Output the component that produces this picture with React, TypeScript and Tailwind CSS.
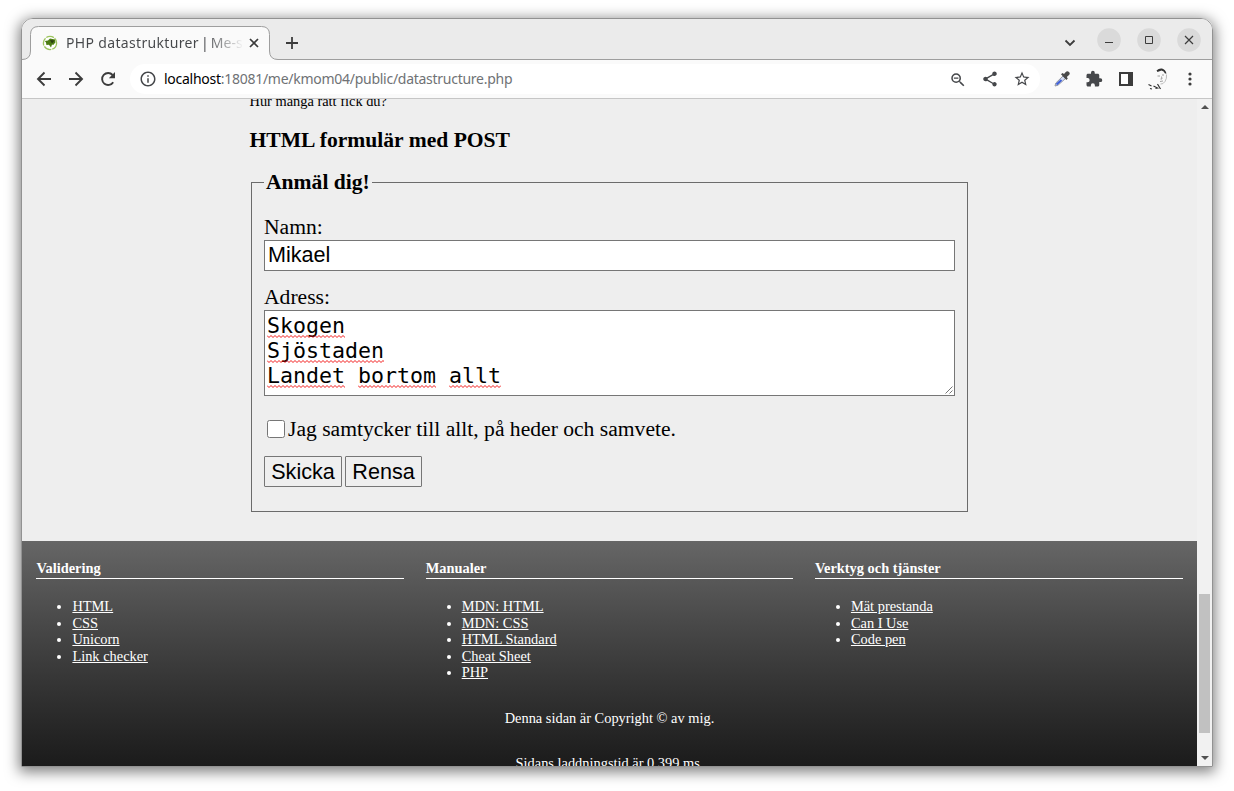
import React from "react";

const columns = [
  { title: "Validering", links: ["HTML", "CSS", "Unicorn", "Link checker"] },
  { title: "Manualer", links: ["MDN: HTML", "MDN: CSS", "HTML Standard", "Cheat Sheet", "PHP"] },
  { title: "Verktyg och tjänster", links: ["Mät prestanda", "Can I Use", "Code pen"] },
];

function Favicon() {
  return (
    <svg width="16" height="16" viewBox="0 0 16 16" className="shrink-0">
      <circle cx="8" cy="8" r="6.6" fill="#fff" stroke="#9cc45e" strokeWidth="1.300" strokeDasharray="8 1" />
      <path d="M2.800 6 6 5.600l2-2 5 1 .4 3-2.200 2.400-1.200-.4L9 12.400l-2-2.600-2.600.2-.4-2.400Z" fill="#4c7c14" />
      <path d="m8 5 4.500.600-2.500 3Z" fill="#2a3d12" />
    </svg>
  );
}

function TabStrip() {
  return (
    <div className="relative flex h-[41px] shrink-0 border-b border-[#9e9e9e] bg-[#ebebeb]">
      <svg width="262" height="34" viewBox="0 0 262 34" className="absolute left-0 top-[7px]">
        <path d="M0 33.500Q8.500 33.500 8.500 25V8.500Q8.500 .5 16.500 .5H239.500Q247.500 .5 247.500 8.500V25Q247.500 33.500 256 33.500V34H0Z" fill="#fafafa" />
        <path d="M0 33.500Q8.500 33.500 8.500 25V8.500Q8.500 .5 16.500 .5H239.500Q247.500 .5 247.500 8.500V25Q247.500 33.500 256 33.500" fill="none" stroke="#9e9e9e" />
      </svg>
      <div className="relative flex h-[48px] w-full items-center pl-5">
        <Favicon />
        <div className="-mt-px ml-2 w-[176px] overflow-hidden whitespace-nowrap bg-[linear-gradient(to_right,#45474a_140px,#45474a00_178px)] bg-clip-text font-['Noto_Sans',sans-serif] text-[14px] text-transparent">
          <span className="tracking-[0.330px]">PHP datastrukturer</span>
          <span className="[word-spacing:-1.500px]"> | Me-s</span>
        </div>
        <svg width="10" height="10" viewBox="0 0 10 10" className="ml-[7px]">
          <path d="m1 1 8 8M9 1 1 9" stroke="#3c3c3c" strokeWidth="1.700" />
        </svg>
        <svg width="12" height="12" viewBox="0 0 12 12" className="ml-[27px]">
          <path d="M6 0v12M0 6h12" stroke="#3c3c3c" strokeWidth="1.800" />
        </svg>
        <svg width="12" height="8" viewBox="0 0 12 8" className="ml-auto mr-[21px]">
          <path d="m1.500 1.500 4.500 4.500 4.500-4.500" fill="none" stroke="#3c3c3c" strokeWidth="1.800" />
        </svg>
        <div className="mr-[11px] flex h-[42px] items-start gap-4 pt-[6px]">
          <svg width="24" height="24" viewBox="0 0 24 24">
            <circle cx="12" cy="12" r="11.800" fill="#dadada" />
            <path d="M8 14.500h8" stroke="#3c3c3c" />
          </svg>
          <svg width="24" height="24" viewBox="0 0 24 24">
            <circle cx="12" cy="12" r="11.800" fill="#dadada" />
            <path d="M8.500 8.500h7v7h-7Z" fill="none" stroke="#3c3c3c" />
          </svg>
          <svg width="24" height="24" viewBox="0 0 24 24">
            <circle cx="12" cy="12" r="11.800" fill="#dadada" />
            <path d="m8 8 8 8M16 8l-8 8" stroke="#3c3c3c" strokeWidth="1.200" />
          </svg>
        </div>
      </div>
    </div>
  );
}

function Icon({ d, className }: { d: string; className?: string }) {
  return (
    <svg width="18" height="18" viewBox="0 0 24 24" className={className} fill="#45474a">
      <path d={d} />
    </svg>
  );
}

function Toolbar() {
  return (
    <div className="flex h-[39px] shrink-0 items-center border-b border-[#c6c6c6] bg-[#fafafa]">
      <svg width="98" height="16" viewBox="0 0 98 16" className="ml-[14px]" fill="none" stroke="#3c3c3c" strokeWidth="1.900">
        <path d="M15 8H2M8.500 1.500 2 8l6.500 6.500" />
        <path d="M33 8h13M39.500 1.500 46 8l-6.500 6.500" />
        <path d="M77.200 11.200A6 6 0 1 1 76.600 4" />
        <path d="M79 1v6.200h-6.200Z" fill="#3c3c3c" stroke="none" />
      </svg>
      <div className="-ml-[4px] flex h-[30px] w-[910px] items-center rounded-full bg-white pl-[9px]">
        <Icon className="shrink-0" d="M11 7h2v2h-2zm0 4h2v6h-2zm1-9C6.480 2 2 6.480 2 12s4.480 10 10 10 10-4.480 10-10S17.520 2 12 2zm0 18c-4.410 0-8-3.590-8-8s3.590-8 8-8 8 3.590 8 8-3.590 8-8 8z" />
        <div className="-mt-px ml-[7px] whitespace-nowrap font-['Noto_Sans',sans-serif] text-[14px] tracking-[-0.270px] text-[#6f7275]">
          <span className="text-black">localhost</span>:18081/me/kmom04/public/datastructure.php
        </div>
        <div className="ml-auto mr-[9px] flex gap-[14px]">
          <Icon d="M15.500 14h-.790l-.280-.270A6.471 6.471 0 0 0 16 9.500 6.500 6.500 0 1 0 9.500 16c1.610 0 3.090-.590 4.230-1.570l.270.280v.790l5 4.990L20.490 19l-4.990-5zm-6 0C7.010 14 5 11.990 5 9.500S7.010 5 9.500 5 14 7.010 14 9.500 11.990 14 9.500 14zM6.500 8.700h6v1.600h-6z" className="mt-px" />
          <Icon d="M18 16.080c-.760 0-1.440.300-1.960.770L8.910 12.700c.050-.230.090-.460.090-.700s-.040-.470-.090-.700l7.050-4.110c.540.500 1.250.810 2.040.810 1.660 0 3-1.340 3-3s-1.340-3-3-3-3 1.340-3 3c0 .240.040.470.090.700L8.040 9.810C7.500 9.310 6.790 9 6 9c-1.660 0-3 1.340-3 3s1.340 3 3 3c.790 0 1.500-.310 2.040-.810l7.120 4.160c-.050.210-.080.430-.080.650 0 1.610 1.310 2.920 2.920 2.920s2.920-1.310 2.920-2.920-1.310-2.920-2.920-2.920z" />
          <Icon d="m22 9.240-7.190-.620L12 2 9.190 8.630 2 9.240l5.460 4.730L5.820 21 12 17.270 18.180 21l-1.630-7.030L22 9.240zM12 15.400l-3.760 2.270 1-4.280-3.320-2.880 4.380-.380L12 6.100l1.710 4.040 4.380.380-3.320 2.880 1 4.280L12 15.400z" />
        </div>
      </div>
      <div className="flex flex-1 items-center">
        <svg width="16" height="16" viewBox="0 0 16 16" className="ml-[14px] shrink-0">
          <path d="m1 15 .8-3 7.200-7 2.500 2.500-7.500 6.700Z" fill="#d3dcf4" stroke="#8b8f9a" strokeWidth=".9" />
          <path d="m2.500 13.500 5-4.500" stroke="#3f5fd6" strokeWidth="2" />
          <path d="m7 3.200 1.500-1.200L10 3l2-2.300Q13.500-.4 15 1q1.500 1.600 0 3l-2.200 2 1 1.500-1.500 1.500Z" fill="#4a4a4a" />
        </svg>
        <Icon className="ml-[15px] shrink-0" d="M20.500 11H19V7c0-1.100-.9-2-2-2h-4V3.500a2.500 2.500 0 0 0-5 0V5H4c-1.100 0-2 .9-2 2v3.800h1.500a2.700 2.700 0 0 1 0 5.400H2V20c0 1.100.9 2 2 2h3.800v-1.500a2.700 2.700 0 0 1 5.400 0V22H17c1.100 0 2-.9 2-2v-4h1.500a2.500 2.500 0 0 0 0-5z" />
        <svg width="14" height="14" viewBox="0 0 14 14" className="ml-[16px] shrink-0">
          <path d="M1 1h12v12H1Z" fill="#fff" stroke="#3c3c3c" strokeWidth="2" />
          <path d="M9 1h5v12H9Z" fill="#3c3c3c" />
        </svg>
        <svg width="22" height="24" viewBox="0 0 22 24" className="ml-[15px] shrink-0" fill="none" stroke="#333">
          <path d="M8.500 3.500Q11 1 14 1.500q3.500 1 4.500 5l-1.500 0Q16 4 13.500 3.500L9.500 5Z" fill="#333" stroke="none" />
          <path d="M18.500 7.500q.5 4-1.500 7-2 3-4.500 2.500" stroke="#bbb" />
          <path d="M9.500 9h2.500M14 8h2M13.500 9.500l.5 2.500-1.500 0M12 14.500l3-.500" stroke="#888" strokeWidth=".8" />
          <path d="m.5 17.500 3 1.500M2 21.500l2 .5M5.500 19l4 2-2 .5M9.500 17l3 5" strokeWidth="1.200" />
        </svg>
        <svg width="4" height="14" viewBox="0 0 4 14" className="ml-[18px] shrink-0" fill="#3c3c3c">
          <circle cx="2" cy="2" r="1.600" />
          <circle cx="2" cy="7" r="1.600" />
          <circle cx="2" cy="12" r="1.600" />
        </svg>
      </div>
    </div>
  );
}

function Misspelled({ children }: { children: string }) {
  const width = children.length * 13;
  const waves = "l2 2 2-2".repeat(Math.ceil(width / 4));
  return (
    <span className="relative">
      {children}
      <svg width={width} height="3" className="absolute bottom-0 left-0">
        <path d={"M0 .5" + waves} fill="none" stroke="#f00000" strokeWidth=".9" />
      </svg>
    </span>
  );
}

function Form() {
  return (
    <fieldset className="ml-[1.500px] -mt-px h-[342px] w-[717px] border border-[#6b6b6b] px-3 text-[21.6px] leading-[25px]">
      <legend className="px-[2px] font-bold">Anmäl dig!</legend>
      <div className="mt-[20px]">Namn:</div>
      <div className="h-[31px] border border-[#767676] bg-white px-[3px] font-['Liberation_Sans',sans-serif] leading-[28px]">Mikael</div>
      <div className="mt-[14px]">Adress:</div>
      <div className="relative h-[86px] border border-[#767676] bg-white px-[2px] pt-[2px] font-['DejaVu_Sans_Mono',monospace]">
        <div><Misspelled>Skogen</Misspelled></div>
        <div><Misspelled>Sjöstaden</Misspelled></div>
        <div><Misspelled>Landet</Misspelled> <Misspelled>bortom</Misspelled> <Misspelled>allt</Misspelled></div>
        <svg width="8" height="8" viewBox="0 0 8 8" className="absolute bottom-px right-px" stroke="#666" strokeWidth=".9">
          <path d="m.5 7.500 7-7M4.500 7.500l3-3" />
        </svg>
      </div>
      <div className="mt-[21px] flex items-center">
        <span className="-mt-[2px] ml-[3px] mr-[3px] h-[18px] w-[18px] rounded-[2.500px] border border-[#767676] bg-white" />
        Jag samtycker till allt, på heder och samvete.
      </div>
      <div className="mt-[14px] flex gap-[3px] font-['Liberation_Sans',sans-serif] leading-[29px]">
        <div className="h-[31px] w-[78px] rounded-[1px] border border-[#767676] bg-[#efefef] text-center">Skicka</div>
        <div className="h-[31px] w-[77px] rounded-[1px] border border-[#767676] bg-[#efefef] text-center">Rensa</div>
      </div>
    </fieldset>
  );
}

function Footer() {
  return (
    <footer className="h-[225px] shrink-0 overflow-hidden bg-gradient-to-b from-[#666] to-[#1b1b1b] px-[14.4px] text-[14.4px] leading-[16.56px] text-white">
      <div className="grid h-[160px] grid-cols-3 gap-[21.6px] pt-[19px]">
        {columns.map((c) => (
          <section key={c.title}>
            <h4 className="h-[19px] border-b border-white font-bold">{c.title}</h4>
            <ul className="mt-[19px] list-disc pl-9">
              {c.links.map((l) => (
                <li key={l}><a className="underline">{l}</a></li>
              ))}
            </ul>
          </section>
        ))}
      </div>
      <p className="mt-[9px] text-center">Denna sidan är Copyright © av mig.</p>
      <p className="mt-[28.400px] text-center">Sidans laddningstid är 0.399 ms.</p>
    </footer>
  );
}

export default function App() {
  return (
    <div className="h-[791px] w-[1234px] overflow-hidden bg-white pl-[21px] pt-[18px]">
      <div className="flex h-[749px] w-[1192px] flex-col overflow-hidden rounded-t-[12px] border border-[#929292] shadow-[0_3px_14px_2px_rgba(0,0,0,0.5)]">
        <TabStrip />
        <Toolbar />
        <div className="flex min-h-0 flex-1 bg-[#eee]">
          <div className="flex w-[1175px] flex-col font-['Liberation_Serif',serif] text-black">
            <main className="h-[442px] shrink-0 overflow-hidden pl-[227.500px]">
              <p className="-mt-[6px] text-[14.4px] leading-[17px]">Hur många rätt fick du?</p>
              <h2 className="mb-[18px] mt-[18px] text-[21.6px] font-bold leading-[25px]">HTML formulär med POST</h2>
              <Form />
            </main>
            <Footer />
          </div>
          <div className="flex w-[15px] flex-col items-center bg-[#f1f1f1] pt-[6px]">
            <svg width="8" height="4" viewBox="0 0 8 4" fill="#505050"><path d="m0 4 4-4 4 4Z" /></svg>
            <div className="mt-[485px] h-[139px] w-[11px] bg-[#c1c1c1]" />
            <svg width="8" height="4" viewBox="0 0 8 4" className="mt-[23px]" fill="#505050"><path d="M0 0h8L4 4Z" /></svg>
          </div>
        </div>
      </div>
    </div>
  );
}
